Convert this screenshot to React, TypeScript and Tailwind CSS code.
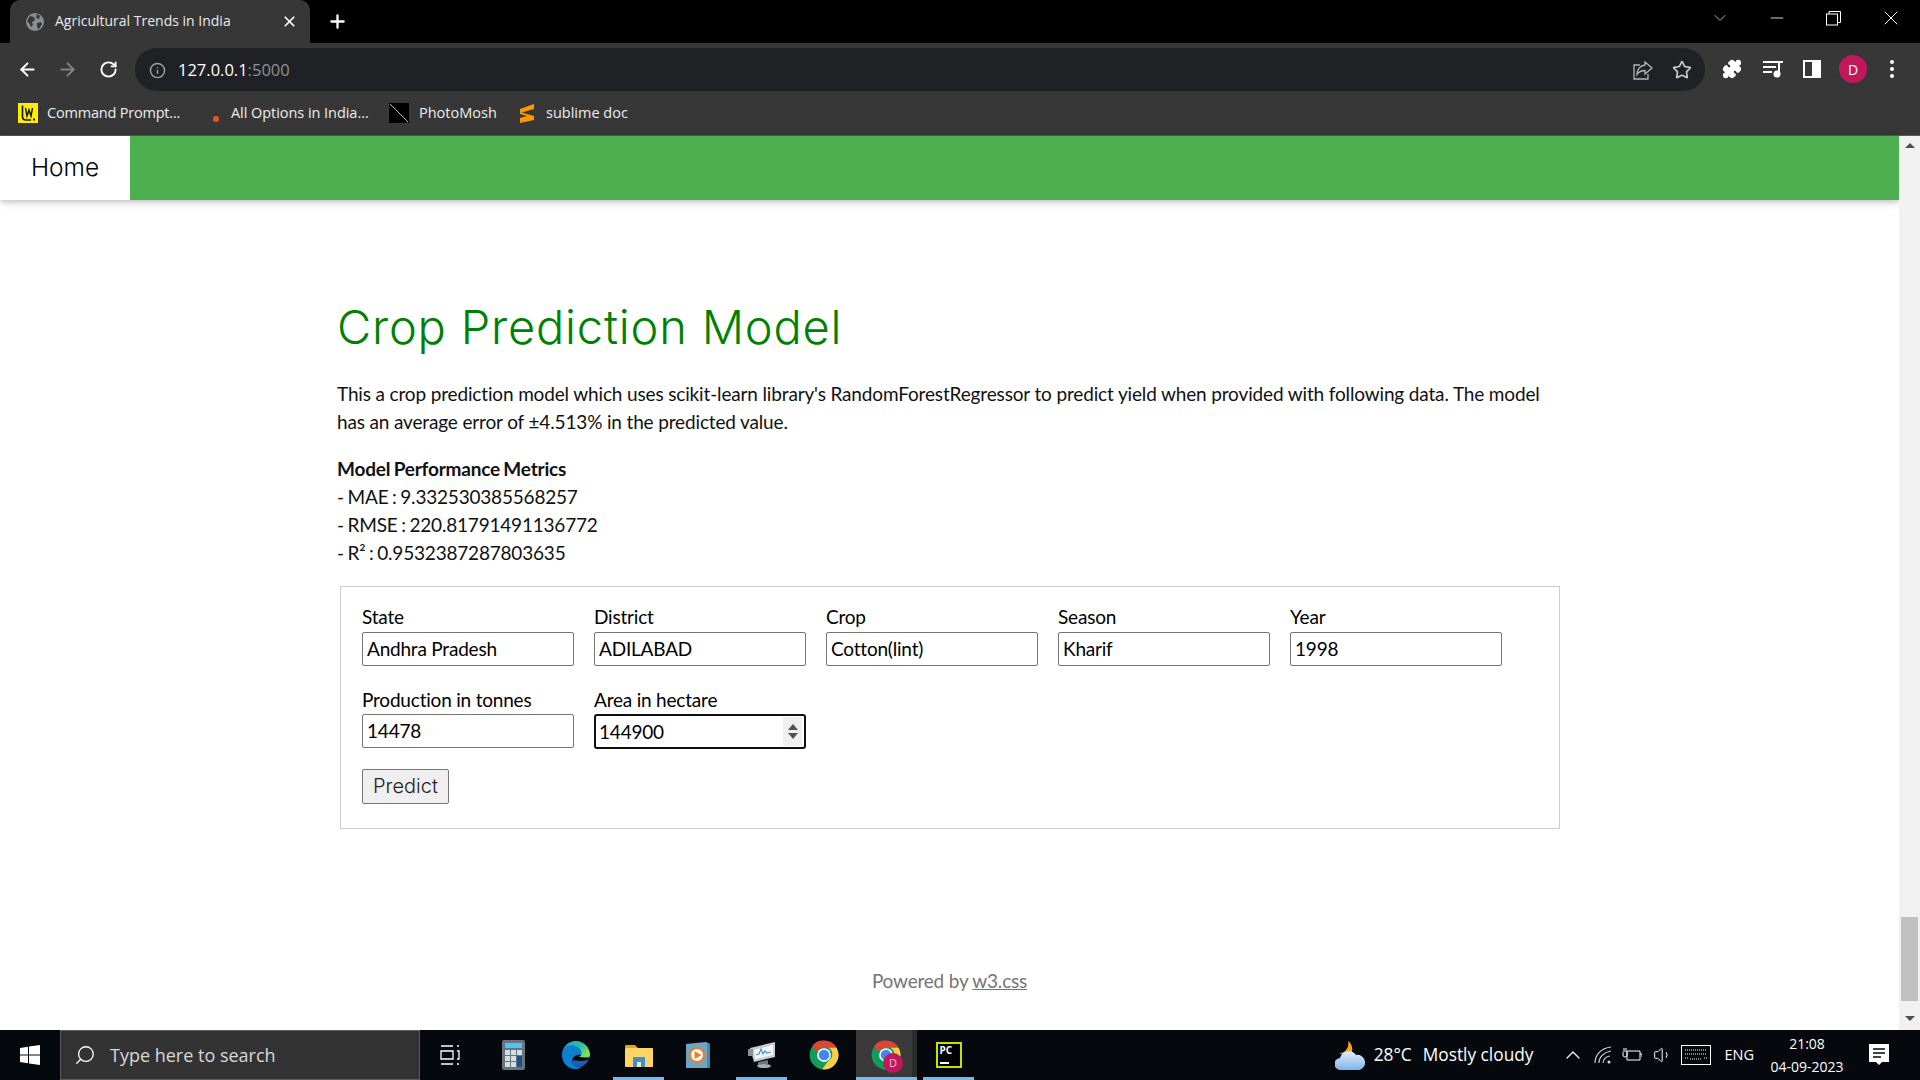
import React from 'react';
import { ArrowLeft, ArrowRight, RotateCw, Info, Star, X, Plus, ChevronDown, ChevronUp, Minus, Puzzle, Search, Volume1 } from 'lucide-react';

const chromeFont = { fontFamily: '"Open Sans", "Noto Sans", sans-serif' };

const ChromeLogo = ({ size = 30 }: { size?: number }) => (
    <svg width={size} height={size} viewBox="0 0 48 48">
        <circle cx="24" cy="24" r="23" fill="#0f9d58" />
        <path d="M24 1a23 23 0 0 1 20 11.500H24a11.500 11.500 0 0 0-11 8L5 9.500A23 23 0 0 1 24 1z" fill="#db4437" />
        <path d="M44 12.500A23 23 0 0 1 21 46.800L31 33a11.500 11.500 0 0 0 0-20.500z" fill="#ffcd40" />
        <circle cx="24" cy="24" r="11" fill="#fff" />
        <circle cx="24" cy="24" r="8.500" fill="#4285f4" />
    </svg>
);

const EdgeLogo = () => (
    <svg width="30" height="30" viewBox="0 0 32 32">
        <defs>
            <linearGradient id="edgeTop" x1="0" y1="0" x2="1" y2="0.600">
                <stop offset="0" stopColor="#1c9bd8" />
                <stop offset="0.600" stopColor="#2fc0a0" />
                <stop offset="1" stopColor="#7ee05f" />
            </linearGradient>
        </defs>
        <path d="M16 1C7 1 1 8 1 16c0 8 6 15 14 15 3 0 6-1 8-3-6 2-11-1-11-6 0-3 2-5 5-6 3-1 6 0 6 3h8c0-9-6-18-15-18z" fill="#0f7fd0" />
        <path d="M31 16c0-8-7-15-15-15C10 1 5 5 3 9c3-3 7-4 11-3 5 1 8 4 8 8 0 2-1 3-3 4h9c2 0 3-1 3-2z" fill="url(#edgeTop)" />
        <path d="M12 22c0 5 5 8 11 6 3-2 6-5 7-8-3 2-7 3-11 2-3 0-5-1-7 0z" fill="#1a5fb8" />
    </svg>
);

const Underline = () => <div className="absolute bottom-0 left-0 h-[3px] w-full bg-[#76b9ed]" />;

const FormField = ({ label, value, focused, lowerLabel }: { label: string; value: string; focused?: boolean; lowerLabel?: boolean }) => (
    <div className="w-[212px]">
        <label className={lowerLabel
            ? 'block h-[29px] pt-[1px] text-[19px] leading-[28px] tracking-[-0.2px] text-black'
            : 'block h-[29px] text-[19px] leading-[28px] tracking-[-0.2px] text-black'}>{label}</label>
        <div className="relative">
            <input
                readOnly
                value={value}
                className={focused
                    ? 'block h-[35px] w-full rounded-[3px] border-2 border-[#101010] bg-white px-[3px] text-[19px] tracking-[-0.2px] text-black outline-none'
                    : 'block h-[34px] w-full rounded-[2px] border border-[#767676] bg-white px-[4px] pb-[1px] text-[19px] tracking-[-0.2px] text-black outline-none'}
            />
            {focused && (
                <div className="absolute right-[4px] top-[3px] flex h-[29px] w-[19px] flex-col items-center justify-center gap-[3px] bg-[#efefef]">
                    <div className="h-0 w-0 border-x-[5px] border-b-[6px] border-x-transparent border-b-[#505050]" />
                    <div className="h-0 w-0 border-x-[5px] border-t-[6px] border-x-transparent border-t-[#505050]" />
                </div>
            )}
        </div>
    </div>
);

export default function App() {
    return (
        <div className="flex h-screen w-full flex-col overflow-hidden bg-white" style={{ fontFamily: 'Lato, sans-serif' }}>

            {/* Tab strip */}
            <div className="flex h-[43px] shrink-0 items-end bg-black pl-[10px] text-white" style={chromeFont}>
                <div className="flex h-[43px] w-[300px] items-center rounded-t-[10px] bg-[#373737] pl-[16px]">
                    <svg width="18" height="18" viewBox="0 0 18 18">
                        <circle cx="9" cy="9" r="9" fill="#8a8d91" />
                        <path d="M4 3l4 1 1 3-3 2 1 3-2 2-2-4-2-2zM11 1l3 2-1 3-3-1zM11 10l4-1 1 2-3 5-2-2z" fill="#373737" />
                    </svg>
                    <span className="ml-[11px] w-[226px] pb-[2px] text-[14px] leading-none text-[#e8eaed]">Agricultural Trends in India</span>
                    <X size={17} strokeWidth={2.4} className="text-white" />
                </div>
                <Plus size={21} strokeWidth={2.6} className="mb-[11px] ml-[17px] text-white" />
                <div className="flex-1" />
                <div className="mb-[7px] flex h-[36px] items-center text-[#d8d8d8]">
                    <ChevronDown size={20} strokeWidth={1} />
                    <Minus size={20} strokeWidth={1} className="ml-[37px] text-white" />
                    <svg width="15" height="15" viewBox="0 0 15 15" fill="none" stroke="#fff" className="ml-[39px]">
                        <rect x="0.500" y="3" width="11" height="11" />
                        <path d="M3 3V0.500h11.500V11.500H12" />
                    </svg>
                    <X size={24} strokeWidth={1} className="ml-[38px] mr-[17px] text-white" />
                </div>
            </div>

            {/* Toolbar */}
            <div className="flex h-[48px] shrink-0 items-center bg-[#373737] pl-[17px] pt-[4px]" style={chromeFont}>
                <ArrowLeft size={21} strokeWidth={2.2} className="text-white" />
                <ArrowRight size={21} strokeWidth={2.2} className="ml-[19px] text-[#848484]" />
                <RotateCw size={19} strokeWidth={2.4} className="ml-[21px] text-white" />
                <div className="ml-[17px] flex h-[43px] w-[1570px] items-center self-end rounded-full bg-[#202124] pl-[14px] pt-[1px]">
                    <Info size={17} className="text-[#a0a2a5]" />
                    <span className="ml-[12px] flex-1 text-[16.500px] text-white">127.0.0.1<span className="text-[#8f9195]">:5000</span></span>
                    <svg width="20" height="20" viewBox="0 0 20 20" fill="none" stroke="#b3b5b8" strokeWidth="1.300" className="mr-[19px]">
                        <path d="M7 5H1v14h14v-5" />
                        <path d="M12 2l7 6-7 6v-3.500c-3 0-6 1-8 4 0-5 3-9 8-9.500z" />
                    </svg>
                    <Star size={20} strokeWidth={2} className="mr-[13px] text-[#c8cacd]" />
                </div>
                <Puzzle size={20} fill="#fff" className="ml-[17px] text-white" />
                <svg width="20" height="18" viewBox="0 0 20 18" className="ml-[21px]" fill="#fff">
                    <rect x="0" y="1" width="15" height="2" />
                    <rect x="0" y="6" width="13" height="2" />
                    <rect x="0" y="11" width="9" height="2" />
                    <rect x="15" y="1" width="5" height="2" />
                    <rect x="15" y="1" width="2" height="13" />
                    <circle cx="14" cy="14" r="3.500" />
                </svg>
                <div className="ml-[20px] flex h-[18px] w-[18px] justify-end border-[2px] border-white">
                    <div className="h-full w-[7px] bg-white" />
                </div>
                <div className="ml-[18px] flex h-[28px] w-[28px] items-center justify-center rounded-full bg-[#c2185b] text-[14px] text-white">D</div>
                <div className="ml-[23px] flex flex-col gap-[3px]">
                    <div className="h-[4px] w-[4px] rounded-full bg-white" />
                    <div className="h-[4px] w-[4px] rounded-full bg-white" />
                    <div className="h-[4px] w-[4px] rounded-full bg-white" />
                </div>
            </div>

            {/* Bookmarks bar */}
            <div className="flex h-[45px] shrink-0 items-center border-b border-[#5a5a5a] bg-[#373737] pl-[18px] text-[14.500px] text-[#eceef0]" style={chromeFont}>
                <svg width="20" height="20" viewBox="0 0 20 20">
                    <rect width="20" height="20" fill="#ffee00" />
                    <path d="M4.500 2.500v11c0 2.500 1 3.500 3.500 3.500h5" fill="none" stroke="#111" strokeWidth="1.600" />
                    <path d="M7.500 5l1.500 8 2-6 2 6 1.500-8" fill="none" stroke="#111" strokeWidth="1.400" />
                    <rect x="15" y="15.500" width="2" height="2" fill="#111" />
                </svg>
                <span className="ml-[9px] w-[134px] whitespace-nowrap tracking-[-0.2px]">Command Prompt...</span>
                <div className="ml-[22px] flex h-[20px] w-[16px] items-end justify-end">
                    <div className="mb-[1px] h-[6px] w-[6px] rounded-full bg-[#f4511e]" />
                </div>
                <span className="ml-[12px] w-[138px] whitespace-nowrap tracking-[-0.05px]">All Options in India...</span>
                <svg width="20" height="20" viewBox="0 0 20 20" className="ml-[20px]">
                    <rect width="20" height="20" fill="#000" />
                    <path d="M1 1l18 18" stroke="#b8b8b8" strokeWidth="1" />
                </svg>
                <span className="ml-[10px] w-[76px] whitespace-nowrap">PhotoMosh</span>
                <svg width="16" height="20" viewBox="0 0 16 20" className="ml-[24px]">
                    <path d="M15 1v5L1 10V6zM1 9l14 4v4L1 20v-5l7-2-7-2z" fill="#ff9800" />
                </svg>
                <span className="ml-[11px] whitespace-nowrap">sublime doc</span>
            </div>

            {/* Page + scrollbar */}
            <div className="flex min-h-0 flex-1">
                <div className="min-w-0 flex-1">
                    <nav className="flex h-[64px] bg-[#4caf50] shadow-[0_2px_5px_rgba(0,0,0,0.16),0_2px_10px_rgba(0,0,0,0.12)]">
                        <a className="flex w-[130px] items-center justify-center bg-white pb-[2px] text-[24.500px] font-light text-black" style={{ fontFamily: 'Inter, sans-serif' }}>Home</a>
                    </nav>

                    <main className="mx-auto w-[1225px]">
                        <h1 className="mt-[97px] mb-[23px] text-[47px] font-light leading-[60px] tracking-[0.8px] text-[#008000]" style={{ fontFamily: 'Inter, sans-serif' }}>Crop Prediction Model</h1>
                        <p className="text-[19px] leading-[28px] tracking-[-0.15px] text-[#111]">
                            This a crop prediction model which uses scikit-learn library's RandomForestRegressor to predict yield when provided with following data. The model has an average error of ±4.513% in the predicted value.
                        </p>
                        <div className="mt-[19px] text-[19px] leading-[28px] tracking-[-0.2px] text-[#111] [word-spacing:-1px]">
                            <p className="font-bold">Model Performance Metrics</p>
                            <p>- MAE : 9.332530385568257</p>
                            <p>- RMSE : 220.81791491136772</p>
                            <p>- R² : 0.9532387287803635</p>
                        </div>

                        <form className="ml-[3px] mt-[19px] h-[243px] w-[1220px] border border-[#cccccc] pl-[21px] pt-[16px]">
                            <div className="flex flex-wrap gap-x-[20px] gap-y-[19px]">
                                <FormField label="State" value="Andhra Pradesh" />
                                <FormField label="District" value="ADILABAD" />
                                <FormField label="Crop" value="Cotton(lint)" />
                                <FormField label="Season" value="Kharif" />
                                <FormField label="Year" value="1998" />
                                <FormField label="Production in tonnes" value="14478" lowerLabel />
                                <FormField label="Area in hectare" value="144900" focused lowerLabel />
                            </div>
                            <button type="button" className="mt-[20px] h-[35px] w-[87px] rounded-[2px] border border-[#767676] bg-[#efefef] pb-[2px] text-[20px] font-light text-[#222]" style={{ fontFamily: 'Inter, sans-serif' }}>Predict</button>
                        </form>

                        <footer className="mt-[138px] text-center text-[19px] leading-[28px] tracking-[-0.2px] text-[#757575]">
                            Powered by <a className="underline">w3.css</a>
                        </footer>
                    </main>
                </div>

                {/* Scrollbar */}
                <div className="flex w-[21px] shrink-0 flex-col items-center bg-[#f1f1f1] px-[2px]">
                    <div className="mt-[7px] h-0 w-0 border-x-[5px] border-b-[5px] border-x-transparent border-b-[#505050]" />
                    <div className="mt-[769px] h-[84px] w-[17px] bg-[#c0c0c0]" />
                    <div className="mt-[15px] h-0 w-0 border-x-[5px] border-t-[5px] border-x-transparent border-t-[#505050]" />
                </div>
            </div>

            {/* Taskbar */}
            <div className="flex h-[50px] shrink-0 items-center bg-[#05080c] text-white" style={chromeFont}>
                <svg width="20" height="20" viewBox="0 0 20 20" className="ml-[20px]" fill="#fff">
                    <path d="M0 3l8-1.200v7.700H0zM9 1.600L20 0v9.500H9zM0 10.500h8v7.700L0 17zM9 10.500h11V20L9 18.400z" />
                </svg>
                <div className="ml-[20px] flex h-[50px] w-[360px] items-center border border-[#5c5c5c] bg-[#333333] pl-[13px]">
                    <Search size={22} strokeWidth={1.4} className="-scale-x-100 text-white" />
                    <span className="ml-[14px] text-[18px] text-[#d8d8d8]">Type here to search</span>
                </div>
                <svg width="20" height="20" viewBox="0 0 20 20" className="ml-[20px]" fill="none" stroke="#fff" strokeWidth="1.300">
                    <path d="M1 1h12M1 19h12M1 6h12v8H1zM17 1h2M17 6h2v8h-2M17 19h2" />
                </svg>

                {/* Calculator */}
                <svg width="23" height="30" viewBox="0 0 23 30" className="ml-[42px]">
                    <rect width="23" height="30" rx="2" fill="#65757f" />
                    <rect x="3" y="3" width="17" height="5" fill="#4fc3f7" />
                    <g fill="#d5dde1">
                        <rect x="3" y="10" width="5" height="5" />
                        <rect x="9" y="10" width="5" height="5" />
                        <rect x="15" y="10" width="5" height="5" />
                        <rect x="3" y="16" width="5" height="5" />
                        <rect x="9" y="16" width="5" height="5" />
                        <rect x="3" y="22" width="5" height="5" />
                        <rect x="9" y="22" width="5" height="5" />
                    </g>
                    <rect x="15" y="16" width="5" height="11" fill="#1f4f8a" />
                </svg>
                <div className="ml-[36px]"><EdgeLogo /></div>

                {/* Explorer */}
                <div className="relative ml-[22px] flex h-[50px] w-[51px] items-center justify-center">
                    <svg width="28" height="23" viewBox="0 0 28 23">
                        <path d="M0 2a1 1 0 0 1 1-1h9l3 3H0z" fill="#e8a317" />
                        <rect y="4" width="28" height="19" rx="1" fill="#ffd666" />
                        <rect x="8" y="13" width="12" height="10" fill="#3f8fd6" />
                        <rect x="12" y="18" width="4" height="5" fill="#ffe9a8" />
                    </svg>
                    <Underline />
                </div>

                {/* Media player */}
                <svg width="24" height="26" viewBox="0 0 24 26" className="ml-[22px]">
                    <path d="M0 2l20-2 4 2v24H0z" fill="#6da5c9" />
                    <rect x="21" y="2" width="3" height="24" fill="#4f87ab" />
                    <circle cx="11" cy="13" r="8" fill="#ef7d22" />
                    <circle cx="11" cy="13" r="6" fill="#fff" />
                    <path d="M8.500 9l7 4-7 4z" fill="#ef7d22" />
                </svg>

                {/* Resource monitor */}
                <div className="relative ml-[26px] flex h-[50px] w-[51px] items-center justify-center">
                    <svg width="28" height="26" viewBox="0 0 28 26">
                        <path d="M2 6L27 0v15L6 20z" fill="#c9cdd0" />
                        <path d="M6 8l19-5v10L7 17z" fill="#f4f8fb" />
                        <path d="M8 13l3-1 2-5 2 5 2-3 2 2 4-1" fill="none" stroke="#4a90c8" strokeWidth="1.200" />
                        <path d="M10 20l10-2v4l-10 1z" fill="#6f7578" />
                        <ellipse cx="16" cy="24" rx="7" ry="2" fill="#a8adb0" />
                        <rect x="0" y="7" width="5" height="7" fill="#8c9194" />
                    </svg>
                    <Underline />
                </div>
                <div className="ml-[22px]"><ChromeLogo /></div>
                <div className="relative ml-[17px] flex h-[50px] w-[61px] items-center border-r-[5px] border-[#2a2b2d] bg-[#3a3a3c] pl-[15px]">
                    <ChromeLogo />
                    <div className="absolute left-[27px] top-[23px] flex h-[20px] w-[20px] items-center justify-center rounded-full bg-[#c2185b] text-[11px] text-[#f0c0d0]">D</div>
                    <div className="absolute bottom-0 left-0 h-[3px] w-[61px] bg-[#76b9ed]" />
                </div>
                <div className="relative ml-[6px] flex h-[50px] w-[51px] items-center justify-center">
                    <div className="flex h-[26px] w-[26px] flex-col border-2 border-[#c6e000] bg-black pl-[2px] pt-[1px] text-[10px] font-bold leading-[11px] text-white">
                        PC
                        <div className="mt-[6px] h-[2px] w-[9px] bg-white" />
                    </div>
                    <Underline />
                </div>

                <div className="flex-1" />

                {/* Tray */}
                <svg width="30" height="29" viewBox="0 0 30 29">
                    <defs>
                        <linearGradient id="cloud" x1="0" y1="0" x2="0" y2="1">
                            <stop offset="0" stopColor="#e3eefa" />
                            <stop offset="1" stopColor="#7db4e8" />
                        </linearGradient>
                    </defs>
                    <path d="M13 0c3 2 5 6 4 11l-5 3-5-1-7-1c4 1 8 0 10-2 3-3 4-6 3-10z" fill="#f5a31a" />
                    <path d="M6 29a6 6 0 0 1-1-12 9 9 0 0 1 16-3 7.500 7.500 0 0 1 3 15z" fill="url(#cloud)" />
                </svg>
                <span className="ml-[9px] text-[17.300px]">28°C</span>
                <span className="ml-[11px] text-[17.300px]">Mostly cloudy</span>
                <ChevronUp size={24} strokeWidth={1.2} className="ml-[28px]" />
                <svg width="18" height="18" viewBox="0 0 18 18" fill="none" stroke="#ddd" strokeWidth="1.100" className="ml-[9px]">
                    <path d="M1 17C1 9 7 2 17 1M5 17c0-6 5-11 12-12M9 17c0-3 3-7 7-7" />
                    <circle cx="15" cy="16" r="1.500" fill="#ddd" stroke="none" />
                </svg>
                <svg width="20" height="16" viewBox="0 0 20 16" fill="none" stroke="#fff" className="ml-[10px]">
                    <path d="M5 4h13v9H5zM18 7h2v3M1 5v3a2 2 0 0 0 4 0V5M2 1v4M4 1v4" />
                </svg>
                <Volume1 size={20} strokeWidth={1.2} className="ml-[11px]" />
                <svg width="30" height="20" viewBox="0 0 30 20" fill="none" stroke="#fff" className="ml-[8px]">
                    <rect x="0.500" y="0.500" width="29" height="19" />
                    <path d="M4 5h22M4 9h22M4 13h3M9 14h12M23 13h3" strokeDasharray="1 1" />
                </svg>
                <span className="ml-[13px] text-[14.500px]">ENG</span>
                <div className="ml-[15px] w-[76px] text-center text-[14px] leading-[23px]">
                    <p>21:08</p>
                    <p>04-09-2023</p>
                </div>
                <svg width="20" height="22" viewBox="0 0 20 22" className="ml-[24px] mr-[31px]">
                    <path d="M0 0h20v18h-7l-3 3-3-3H0z" fill="#fff" />
                    <path d="M4 5h12M4 9h12M4 13h8" stroke="#05080c" strokeWidth="1.300" />
                </svg>
            </div>
        </div>
    );
}
